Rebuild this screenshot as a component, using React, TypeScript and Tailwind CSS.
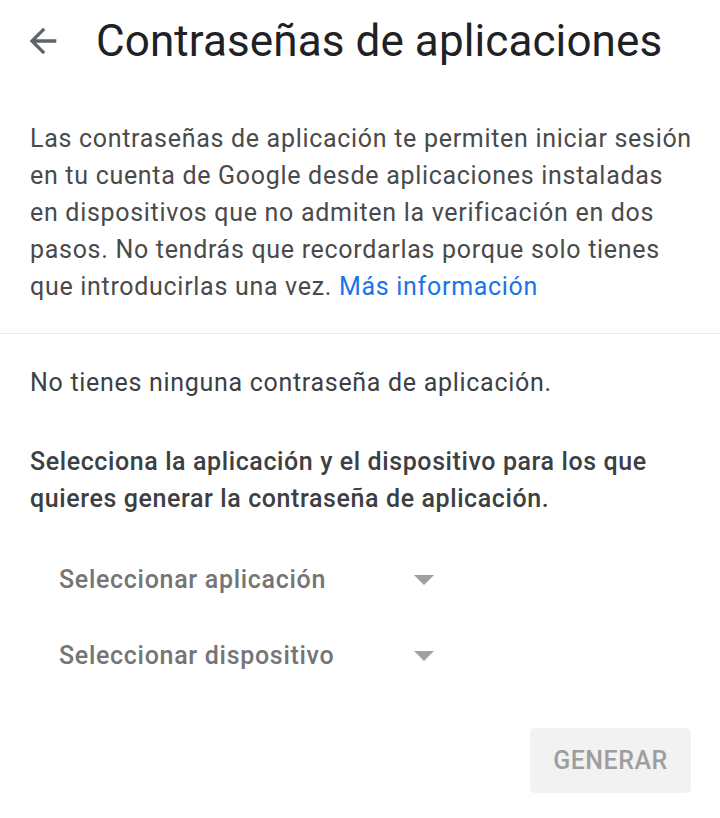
import { useState } from "react";

function BackArrow() {
  return (
    <svg width="40" height="40" viewBox="0 0 24 24" className="text-[#5f6368]">
      <path d="M20 11H7.83l5.59-5.59L12 4l-8 8 8 8 1.41-1.41L7.83 13H20v-2z" fill="currentColor" />
    </svg>
  );
}

function Caret() {
  return (
    <svg width="20" height="10" viewBox="0 0 20 10">
      <path d="M0 0h20L10 10z" fill="#a0a0a0" />
    </svg>
  );
}

export default function App() {
  const [app] = useState("Seleccionar aplicación");
  const [device] = useState("Seleccionar dispositivo");

  return (
    <div className="w-[720px] h-[818px] bg-white font-['Roboto',sans-serif] overflow-hidden">
      {/* Cabecera */}
      <header className="flex items-center h-[82px] pl-[23px]">
        <button className="flex items-center justify-center w-[40px] h-[40px]">
          <BackArrow />
        </button>
        <h1 className="ml-[33px] text-[44px] leading-none text-[#202124] tracking-[0.1px]">Contraseñas de aplicaciones</h1>
      </header>

      {/* Descripción */}
      <section className="px-[30px] pt-[38px] pb-[28px] border-b border-[#ececec]">
        <p className="text-[25px] leading-[37px] tracking-[0.7px] text-[#4a4a4a] whitespace-nowrap">
          Las contraseñas de aplicación te permiten iniciar sesión
          <br />
          en tu cuenta de Google desde aplicaciones instaladas
          <br />
          en dispositivos que no admiten la verificación en dos
          <br />
          pasos. No tendrás que recordarlas porque solo tienes
          <br />
          que introducirlas una vez. <a className="text-[#1a73e8]">Más información</a>
        </p>
      </section>

      <section className="px-[30px] pt-[30px]">
        <p className="text-[25px] leading-[37px] tracking-[0.7px] text-[#3c4043]">No tienes ninguna contraseña de aplicación.</p>
        <p className="mt-[42px] text-[25px] leading-[37px] tracking-[0.6px] font-medium text-[#3c4043] whitespace-nowrap">
          Selecciona la aplicación y el dispositivo para los que
          <br />
          quieres generar la contraseña de aplicación.
        </p>

        <div className="mt-[45px] pl-[29px] flex flex-col gap-[40px]">
          <div className="flex items-center w-[375px] justify-between h-[36px]">
            <span className="text-[25px] tracking-[0.7px] text-[#757575] font-medium">{app}</span>
            <Caret />
          </div>
          <div className="flex items-center w-[375px] justify-between h-[36px]">
            <span className="text-[25px] tracking-[0.7px] text-[#757575] font-medium">{device}</span>
            <Caret />
          </div>
        </div>

        <div className="flex justify-end mt-[54px]">
          <button className="w-[161px] h-[65px] mr-[-1px] rounded-[5px] bg-[#f2f2f2] text-[25px] tracking-[0.5px] font-medium text-[#9e9e9e]">
            GENERAR
          </button>
        </div>
      </section>
    </div>
  );
}
